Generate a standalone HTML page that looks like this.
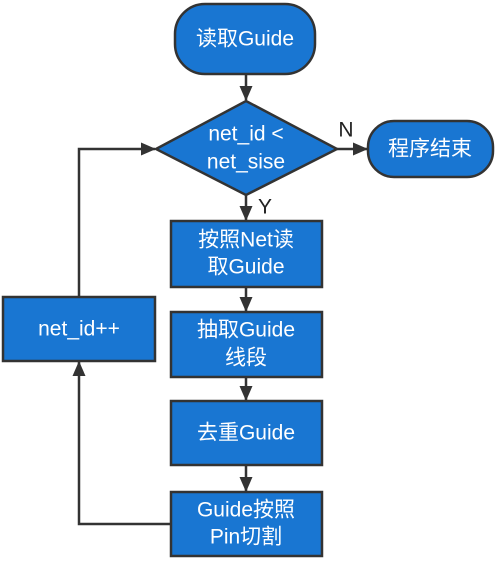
<!DOCTYPE html>
<html><head><style>body{margin:0;background:#fff}svg{display:block}text{font-family:"Liberation Sans","Noto Sans CJK SC",sans-serif;font-size:21px;fill:#fff;text-anchor:middle;dominant-baseline:central}</style></head>
<body>
<svg width="496" height="561" viewBox="0 0 496 561">
<defs><marker id="a" markerWidth="15" markerHeight="13" refX="14" refY="6.5" orient="auto" markerUnits="userSpaceOnUse"><path d="M0,0 L15,6.5 L0,13 z" fill="#333"/></marker></defs>
<g stroke="#333" stroke-width="2.5" fill="none">
<path d="M246,74 V100" marker-end="url(#a)" />
<path d="M337,149 H367" marker-end="url(#a)"/>
<path d="M246,195 V220" marker-end="url(#a)"/>
<path d="M246,287 V311" marker-end="url(#a)"/>
<path d="M246,377 V400" marker-end="url(#a)"/>
<path d="M246,465 V491" marker-end="url(#a)"/>
<path d="M79,297 V149 H155" marker-end="url(#a)"/>
<path d="M171,524 H79 V362" marker-end="url(#a)"/>
</g>
<g fill="#1976d2" stroke="#333" stroke-width="2.5">
<rect x="175" y="4" width="140" height="70" rx="30"/>
<path d="M246,101 L337,149 L246,195 L156,149 Z"/>
<rect x="368" y="121" width="125" height="56" rx="26"/>
<rect x="171" y="221" width="151" height="66"/>
<rect x="171" y="312" width="151" height="65"/>
<rect x="171" y="401" width="151" height="64"/>
<rect x="171" y="492" width="151" height="64"/>
<rect x="3" y="297" width="152" height="64"/>
</g>
<text x="245" y="39">读取Guide</text>
<text x="246" y="134">net_id &lt;</text>
<text x="246" y="162">net_sise</text>
<text x="430" y="149">程序结束</text>
<text x="246" y="240">按照Net读</text>
<text x="246" y="267">取Guide</text>
<text x="246" y="330">抽取Guide</text>
<text x="246" y="358">线段</text>
<text x="246" y="433">去重Guide</text>
<text x="246" y="510">Guide按照</text>
<text x="246" y="537">Pin切割</text>
<text x="79" y="329">net_id++</text>
<text x="346" y="130" style="fill:#222">N</text>
<text x="265" y="207" style="fill:#222">Y</text>
</svg>
</body></html>
